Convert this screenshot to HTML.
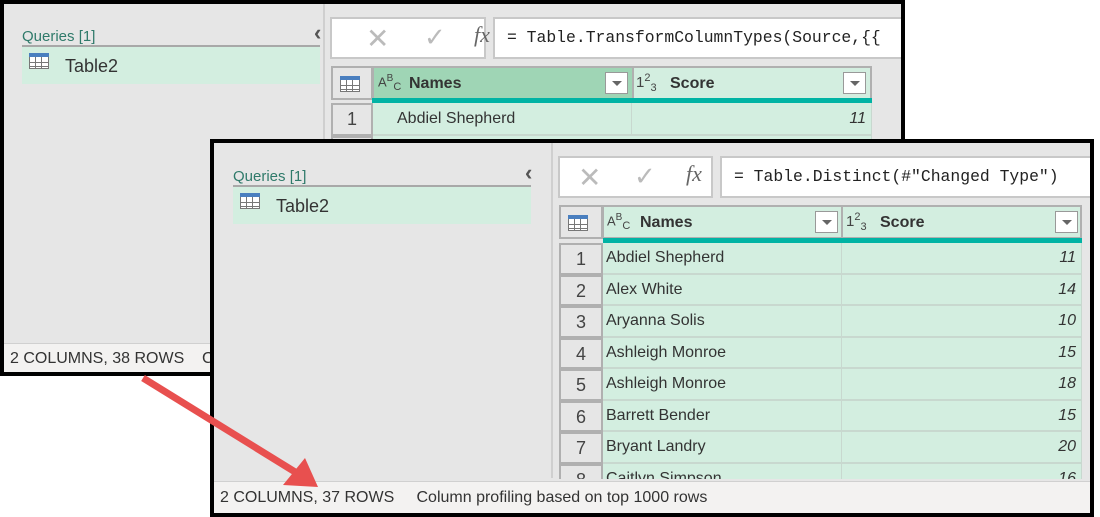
<!DOCTYPE html>
<html><head><meta charset="utf-8"><style>
*{box-sizing:border-box;margin:0;padding:0}
body{width:1100px;height:517px;background:#fff;position:relative;overflow:hidden;font-family:"Liberation Sans",sans-serif;color:#333}
.win{position:absolute;background:#e6e6e6;border:4px solid #000;overflow:hidden}
.a{position:absolute}
.ql{font-size:15px;color:#2f7a6a}
.qline{height:2px;background:#a8a8a8}
.qi{background:#d3eee0;font-size:17px;color:#333}
.tic{position:absolute;width:20px;height:16px;border:1px solid #777;background:#fff;
background-image:linear-gradient(#777,#777),linear-gradient(#777,#777),linear-gradient(90deg,transparent 5px,#777 5px,#777 6px,transparent 6px,transparent 11px,#777 11px,#777 12px,transparent 12px);
background-size:100% 1px,100% 1px,100% 100%;background-position:0 8px,0 12px,0 0;background-repeat:no-repeat}
.tic:before{content:"";position:absolute;left:-1px;top:-1px;right:-1px;height:4px;background:#4a7fbf}
.fbtn{background:#fff;border:2px solid #c8c8c8}
.fin{background:#fff;border:2px solid #c8c8c8;font-family:"Liberation Mono",monospace;font-size:16.4px;color:#222;white-space:nowrap;overflow:hidden;padding-left:12px;line-height:37px}
.hdr{background:#d3eee0;border:2px solid #b0b0b0;font-weight:bold;font-size:16px;color:#333}
.rn{background:#e6e6e6;border:2px solid #b0b0b0;font-size:18px;color:#444;text-align:center}
.cell{background:#d3eee0;border-bottom:2px solid #c8d8cf;border-right:1px solid #c8d8cf;font-size:16px;color:#333;white-space:nowrap;overflow:hidden}
.num{text-align:right;font-style:italic;padding-right:5px}
.dd{position:absolute;width:23px;height:22px;background:#fff;border:1px solid #999}
.dd:after{content:"";position:absolute;left:6px;top:8px;border-left:5px solid transparent;border-right:5px solid transparent;border-top:5px solid #666}
.status{background:#f3f2f1;font-size:16px;color:#333;border-top:1px solid #d0d0d0;white-space:nowrap}
</style></head><body>

<!-- window 1 -->
<div class="win" style="left:0;top:0;width:905px;height:376px">
 <div class="a ql" style="left:18px;top:24px">Queries [1]</div>
 <div class="a qline" style="left:18px;top:41px;width:298px"></div>
 <div class="a qi" style="left:18px;top:43px;width:298px;height:37px"></div>
 <div class="tic" style="left:25px;top:49px"></div>
 <div class="a" style="left:61px;top:52px;font-size:18px">Table2</div>
 <div class="a" style="left:310px;top:16px;font-size:22px;color:#555;font-weight:bold">&#8249;</div>
 <div class="a" style="left:319px;top:0;width:2px;height:339px;background:#cfcfcf"></div>
 <div class="a fbtn" style="left:326px;top:13px;width:156px;height:42px"></div>
 <div class="a" style="left:362px;top:18px;font-size:28px;color:#bbb">&#10005;</div>
 <div class="a" style="left:420px;top:18px;font-size:26px;color:#bbb">&#10003;</div>
 <div class="a" style="left:470px;top:18px;font-size:22px;color:#666;font-family:'Liberation Serif',serif;font-style:italic">fx</div>
 <div class="a fin" style="left:489px;top:13px;width:420px;height:42px">= Table.TransformColumnTypes(Source,{{</div>
 <div class="a hdr" style="left:327px;top:62px;width:42px;height:34px;background:#e6e6e6"></div>
 <div class="tic" style="left:336px;top:72px"></div>
 <div class="a hdr" style="left:368px;top:62px;width:262px;height:34px;background:#9fd5b5;padding:7px 0 0 35px">Names</div>
 <div class="a" style="left:374px;top:69px;font-size:13px;color:#444">A<sup style="font-size:10px">B</sup><sub style="font-size:11px">C</sub></div>
 <div class="dd" style="left:601px;top:68px"></div>
 <div class="a hdr" style="left:628px;top:62px;width:240px;height:34px;padding:7px 0 0 36px">Score</div>
 <div class="a" style="left:632px;top:68px;font-size:15px;color:#444">1<sup style="font-size:11px">2</sup><sub style="font-size:11px">3</sub></div>
 <div class="dd" style="left:839px;top:68px"></div>
 <div class="a" style="left:368px;top:94px;width:500px;height:5px;background:#00b3a4"></div>
 <div class="a rn" style="left:327px;top:99px;width:42px;height:33px;line-height:29px">1</div>
 <div class="a cell" style="left:369px;top:99px;width:259px;height:33px;line-height:31px;padding-left:24px">Abdiel Shepherd</div>
 <div class="a cell num" style="left:628px;top:99px;width:240px;height:33px;line-height:31px">11</div>
 <div class="a rn" style="left:327px;top:132px;width:42px;height:30px"></div>
 <div class="a cell" style="left:369px;top:132px;width:499px;height:30px"></div>
 <div class="a status" style="left:0;top:339px;width:905px;height:33px;padding:6px 0 0 6px">2 COLUMNS, 38 ROWS &nbsp;&nbsp; Column profiling based on top 1000 rows</div>
</div>

<!-- window 2 -->
<div class="win" style="left:210px;top:139px;width:884px;height:378px">
 <div class="a ql" style="left:19px;top:25px">Queries [1]</div>
 <div class="a qline" style="left:19px;top:42px;width:298px"></div>
 <div class="a qi" style="left:19px;top:44px;width:298px;height:37px"></div>
 <div class="tic" style="left:26px;top:50px"></div>
 <div class="a" style="left:62px;top:53px;font-size:18px">Table2</div>
 <div class="a" style="left:311px;top:17px;font-size:22px;color:#555;font-weight:bold">&#8249;</div>
 <div class="a" style="left:337px;top:0;width:2px;height:335px;background:#cfcfcf"></div>
 <div class="a fbtn" style="left:344px;top:13px;width:155px;height:42px"></div>
 <div class="a" style="left:364px;top:18px;font-size:28px;color:#bbb">&#10005;</div>
 <div class="a" style="left:420px;top:18px;font-size:26px;color:#bbb">&#10003;</div>
 <div class="a" style="left:472px;top:18px;font-size:22px;color:#666;font-family:'Liberation Serif',serif;font-style:italic">fx</div>
 <div class="a fin" style="left:506px;top:13px;width:380px;height:42px">= Table.Distinct(#"Changed Type")</div>
 <div class="a hdr" style="left:345px;top:62px;width:44px;height:34px;background:#e6e6e6"></div>
 <div class="tic" style="left:354px;top:72px"></div>
 <div class="a hdr" style="left:388px;top:62px;width:241px;height:34px;padding:7px 0 0 36px">Names</div>
 <div class="a" style="left:393px;top:69px;font-size:13px;color:#444">A<sup style="font-size:10px">B</sup><sub style="font-size:11px">C</sub></div>
 <div class="dd" style="left:601px;top:68px"></div>
 <div class="a hdr" style="left:627px;top:62px;width:241px;height:34px;padding:7px 0 0 37px">Score</div>
 <div class="a" style="left:632px;top:68px;font-size:15px;color:#444">1<sup style="font-size:11px">2</sup><sub style="font-size:11px">3</sub></div>
 <div class="dd" style="left:841px;top:68px"></div>
 <div class="a" style="left:389px;top:95px;width:479px;height:5px;background:#00b3a4"></div>

 <div class="a" style="left:345px;top:100px;width:523px;height:236px;overflow:hidden">
  <div style="position:absolute;left:0;top:0;width:523px">
   <div style="display:flex;height:31.5px"><div class="rn" style="width:44px;line-height:28px">1</div><div class="cell" style="width:239px;line-height:30px;padding-left:3px">Abdiel Shepherd</div><div class="cell num" style="width:240px;line-height:30px">11</div></div>
   <div style="display:flex;height:31.5px"><div class="rn" style="width:44px;line-height:28px">2</div><div class="cell" style="width:239px;line-height:30px;padding-left:3px">Alex White</div><div class="cell num" style="width:240px;line-height:30px">14</div></div>
   <div style="display:flex;height:31.5px"><div class="rn" style="width:44px;line-height:28px">3</div><div class="cell" style="width:239px;line-height:30px;padding-left:3px">Aryanna Solis</div><div class="cell num" style="width:240px;line-height:30px">10</div></div>
   <div style="display:flex;height:31.5px"><div class="rn" style="width:44px;line-height:28px">4</div><div class="cell" style="width:239px;line-height:30px;padding-left:3px">Ashleigh Monroe</div><div class="cell num" style="width:240px;line-height:30px">15</div></div>
   <div style="display:flex;height:31.5px"><div class="rn" style="width:44px;line-height:28px">5</div><div class="cell" style="width:239px;line-height:30px;padding-left:3px">Ashleigh Monroe</div><div class="cell num" style="width:240px;line-height:30px">18</div></div>
   <div style="display:flex;height:31.5px"><div class="rn" style="width:44px;line-height:28px">6</div><div class="cell" style="width:239px;line-height:30px;padding-left:3px">Barrett Bender</div><div class="cell num" style="width:240px;line-height:30px">15</div></div>
   <div style="display:flex;height:31.5px"><div class="rn" style="width:44px;line-height:28px">7</div><div class="cell" style="width:239px;line-height:30px;padding-left:3px">Bryant Landry</div><div class="cell num" style="width:240px;line-height:30px">20</div></div>
   <div style="display:flex;height:31.5px"><div class="rn" style="width:44px;line-height:28px">8</div><div class="cell" style="width:239px;line-height:30px;padding-left:3px">Caitlyn Simpson</div><div class="cell num" style="width:240px;line-height:30px">16</div></div>
  </div>
 </div>
 <div class="a status" style="left:0;top:338px;width:884px;height:35px;padding:7px 0 0 6px">2 COLUMNS, 37 ROWS &nbsp;&nbsp;&nbsp; Column profiling based on top 1000 rows</div>
</div>

<!-- arrow on top -->
<svg class="a" style="left:0;top:0;z-index:5" width="1100" height="517">
 <line x1="143" y1="378" x2="300" y2="475" stroke="#e8504f" stroke-width="7"/>
 <polygon points="318,487 283,485 305,458" fill="#e8504f"/>
</svg>
</body></html>
